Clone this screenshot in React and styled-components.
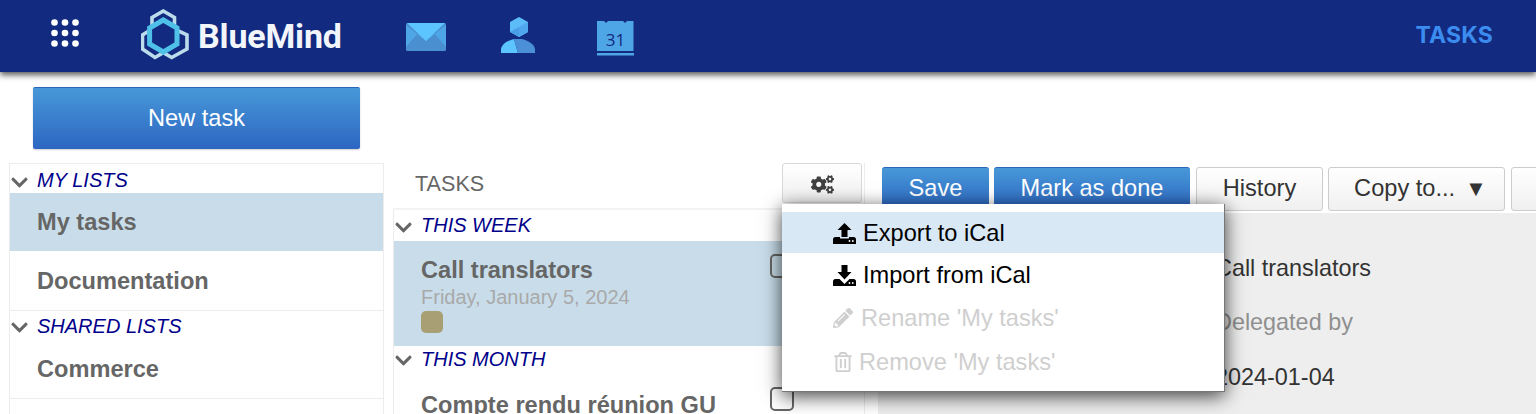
import React from "react";
import styled, { createGlobalStyle } from "styled-components";
import { FaCogs, FaPencilAlt, FaRegTrashAlt, FaChevronDown } from "react-icons/fa";

const Global = createGlobalStyle`
  html, body { margin: 0; padding: 0; height: 414px; overflow: hidden; background: #fff; }
  body { font-family: "Liberation Sans", Arial, sans-serif; }
  * { box-sizing: border-box; }
`;

const Page = styled.div`
  width: 1536px;
  height: 414px;
  overflow: hidden;
  display: flex;
  flex-direction: column;
`;

const TopBar = styled.header`
  position: relative;
  z-index: 2;
  flex: 0 0 72px;
  display: flex;
  align-items: center;
  background: #122a80;
  box-shadow: 0 3px 6px rgba(0, 0, 0, 0.65);
`;

const AppGrid = styled.svg`
  width: 30px;
  height: 30px;
  margin-left: 50px;
  margin-top: -6px;
`;

const Logo = styled.div`
  display: flex;
  align-items: center;
  margin-left: 61px;
  margin-top: -3px;
  width: 265px;
`;

const LogoName = styled.span`
  font-family: "Roboto", sans-serif;
  font-size: 34px;
  font-weight: 700;
  letter-spacing: -0.15px;
  color: #f2f6fb;
  margin-left: 9px;
  margin-top: 3px;
`;

const AppIcon = styled.svg`
  display: block;
  flex: none;
  margin-left: ${(p) => p.$ml || 0}px;
  margin-top: ${(p) => p.$mt || 0}px;
`;

const AppName = styled.div`
  margin-left: auto;
  margin-right: 43px;
  margin-top: -3px;
  font-family: "Inter", sans-serif;
  font-size: 23px;
  font-weight: 700;
  letter-spacing: 0.2px;
  color: #3c8cf0;
`;

const ActionRow = styled.div`
  flex: 0 0 91px;
  padding: 15px 0 0 33px;
`;

const PrimaryBig = styled.button`
  display: block;
  width: 327px;
  height: 62px;
  padding: 0;
  border: 0;
  border-top: 1px solid #2a66b8;
  border-radius: 2px;
  background: linear-gradient(#4898d8, #2c66c2);
  color: #fff;
  font: 23.6px "Liberation Sans", Arial, sans-serif;
  box-shadow: 0 1px 2px rgba(0, 0, 0, 0.2);
`;

const Columns = styled.div`
  flex: 1;
  display: flex;
  padding-left: 9px;
  min-height: 0;
`;

const Sidebar = styled.aside`
  flex: 0 0 375px;
  height: 290px;
  border: 1px solid #ececec;
  border-bottom: 0;
`;

const SectionHead = styled.div`
  display: flex;
  align-items: center;
  height: ${(p) => p.$h}px;
  padding-top: ${(p) => p.$pt || 0}px;
  padding-bottom: ${(p) => p.$pb || 0}px;
  color: #00008b;
  font-size: 20px;
  font-style: italic;
`;

const Chevron = styled(FaChevronDown)`
  flex: none;
  width: 19px;
  height: 19px;
  margin: 3px 8px 0 0;
  color: #666;
`;

const ListRow = styled.div`
  height: ${(p) => p.$h}px;
  display: flex;
  align-items: center;
  padding-left: 27px;
  padding-bottom: ${(p) => p.$pb || 0}px;
  padding-top: ${(p) => p.$pt || 0}px;
  font-size: 23.6px;
  font-weight: 700;
  color: #666;
  background: ${(p) => (p.$active ? "#c8dde9" : "transparent")};
  border-bottom: ${(p) => (p.$line ? "1px solid #ececec" : "0")};
`;

const Middle = styled.section`
  flex: 0 0 472px;
  margin-left: 9px;
  border-right: 1px solid #ececec;
`;

const MiddleHead = styled.div`
  display: flex;
  align-items: flex-start;
  height: 47px;
  border-bottom: 2px solid #f3f3f3;
  padding-left: 22px;
  padding-right: 2px;
`;

const MiddleTitle = styled.div`
  margin-top: 8px;
  font-size: 21.6px;
  color: #666;
`;

const MenuAnchor = styled.div`
  position: relative;
  margin-left: auto;
`;

const GearButton = styled.button`
  display: flex;
  justify-content: center;
  width: 80px;
  height: 40px;
  padding: 9px 0 0;
  border: 1px solid #d8d8d8;
  border-radius: 3px;
  background: linear-gradient(#fff, #f0f0f0);
  color: #404040;
  font-size: 23px;
`;

const Menu = styled.div`
  position: absolute;
  z-index: 5;
  left: 0;
  top: 41px;
  width: 443px;
  height: 188px;
  padding-top: 8px;
  background: #fff;
  border: 1px solid #777;
  border-width: 0 1px 1px 0;
  box-shadow: 0 4px 18px rgba(0, 0, 0, 0.75);
`;

const MenuItem = styled.div`
  display: flex;
  align-items: center;
  height: ${(p) => p.$h}px;
  padding: 2px 0 0 51px;
  font-size: 23.6px;
  color: ${(p) => (p.$disabled ? "#cfcfcf" : "#000")};
  background: ${(p) => (p.$hot ? "#d9e8f5" : "transparent")};
  white-space: nowrap;
  svg {
    flex: none;
    margin-right: ${(p) => p.$gap}px;
  }
`;

const TaskList = styled.div`
  border-left: 1px solid #ececec;
`;

const TaskRow = styled.div`
  position: relative;
  padding: ${(p) => p.$pt}px 0 0 27px;
  height: ${(p) => p.$h}px;
  background: ${(p) => (p.$active ? "#c8dde9" : "transparent")};
`;

const TaskTitle = styled.div`
  font-size: 23.6px;
  line-height: 29px;
  font-weight: 700;
  color: #666;
  white-space: nowrap;
`;

const TaskDate = styled.div`
  font-size: 20px;
  line-height: 25px;
  color: #a9a9a9;
`;

const TaskTag = styled.div`
  width: 22px;
  height: 22px;
  margin-top: 1px;
  border-radius: 5px;
  background: #a8a074;
`;

const TaskCheck = styled.div`
  position: absolute;
  left: 376px;
  top: ${(p) => p.$top}px;
  width: 24px;
  height: 24px;
  border: 2px solid #666;
  border-radius: 5px;
`;

const Detail = styled.section`
  flex: 1;
  margin-left: 13px;
  min-width: 0;
`;

const DetailBar = styled.div`
  display: flex;
  gap: 5px;
  height: 50px;
  padding: 4px 0 0 4px;
  background: #fff;
`;

const BlueButton = styled.button`
  flex: none;
  width: ${(p) => p.$w}px;
  height: 44px;
  padding: 0 0 2px;
  border: 0;
  border-top: 1px solid #2a66b8;
  border-radius: 3px;
  background: linear-gradient(#4898d8, #2c66c2);
  color: #fff;
  font: 23.6px "Liberation Sans", Arial, sans-serif;
`;

const PlainButton = styled.button`
  flex: none;
  width: ${(p) => p.$w}px;
  height: 44px;
  margin-left: ${(p) => p.$ml || 0}px;
  padding: 0 0 2px ${(p) => p.$pl || 0}px;
  border: 1px solid #ccc;
  border-radius: 3px;
  background: linear-gradient(#fff, #f0f0f0);
  color: #333;
  font: 23.6px "Liberation Sans", Arial, sans-serif;
`;

const Caret = styled.span`
  margin-left: 10px;
  font-size: 22px;
  line-height: 20px;
`;

const DetailBody = styled.div`
  height: 240px;
  background: #eee;
  padding: 42px 0 0 337px;
`;

const Field = styled.div`
  font-size: 23.4px;
  line-height: 27px;
  height: ${(p) => p.$h}px;
  color: ${(p) => (p.$muted ? "#909090" : "#333")};
  white-space: nowrap;
`;

const dots = [];
for (let y = 0; y < 3; y++) for (let x = 0; x < 3; x++) dots.push([x, y]);

const Tray = ({ notch }) => (
  <>
    <path d={notch} fill="currentColor" />
    <circle cx="16.5" cy="18" r="0.9" fill="#fff" />
    <circle cx="19.8" cy="18" r="0.9" fill="#fff" />
  </>
);

const UploadIcon = () => (
  <svg width="23" height="21" viewBox="0 0 23 21">
    <path d="M11.500 0 L18.500 7 H14.500 V14 H8.500 V7 H4.500 Z" fill="currentColor" />
    <Tray notch="M0 21 V16.500 Q0 14 2.500 14 H7 V15.500 H16 V14 H20.500 Q23 14 23 16.500 V21 Z" />
  </svg>
);

const DownloadIcon = () => (
  <svg width="23" height="21" viewBox="0 0 23 21">
    <path d="M8.500 0 H14.500 V7 H18.500 L11.500 14.500 L4.500 7 H8.500 Z" fill="currentColor" />
    <Tray notch="M0 21 V16.500 Q0 14 2.500 14 H6.500 L11.500 19 L16.500 14 H20.500 Q23 14 23 16.500 V21 Z" />
  </svg>
);

export default function App() {
  return (
    <Page>
      <Global />
      <TopBar>
        <AppGrid viewBox="0 0 30 30">
          {dots.map(([x, y]) => (
            <circle key={`${x}${y}`} cx={4.5 + x * 10.5} cy={4.5 + y * 10.5} r="3.3" fill="#fff" />
          ))}
        </AppGrid>
        <Logo>
          <AppIcon width="48" height="51" viewBox="0 0 48 51">
            <path
              d="M22.300 2 L33.500 8.500 V20 L46 26 V40 L30.700 48.500 L22.300 43.700 L14 48.500 L1.500 40 V26 L11 20 V8.500 Z"
              fill="none"
              stroke="#bcdcec"
              strokeWidth="3.6"
            />
            <path
              d="M22.300 11 L36 19 V35 L22.300 43 L8.600 35 V19 Z"
              fill="#122a80"
              stroke="#4fc0e8"
              strokeWidth="5"
            />
          </AppIcon>
          <LogoName>BlueMind</LogoName>
        </Logo>
        <AppIcon width="40" height="29" viewBox="0 0 40 29" $mt={2}>
          <rect width="40" height="28" rx="1.5" fill="#4a8fd0" />
          <path d="M0 2 L20 18 L40 2 V24 L28 10 L20 17 L12 10 L0 24 Z" fill="#4fa6e6" />
          <path d="M1 0 H39 L20 18 Z" fill="#5cc4ff" />
        </AppIcon>
        <AppIcon width="36" height="38" viewBox="0 0 36 38" $ml={55}>
          <path d="M18 0 L27 5 V15 L18 20 L9 15 V5 Z" fill="#5cbcf8" />
          <path d="M18 10 L27 5 V15 L18 20 Z" fill="#4fa8ee" />
          <path d="M9 15 L18 10 V20 Z" fill="#4a9ee6" />
          <path d="M0 36 V32 C1 27 6 24 13 22 L17 36 Z" fill="#5cc4ff" />
          <path d="M34 36 V32 C33 27 28 24 21 22 H13 L17 36 Z" fill="#4a8fd8" />
        </AppIcon>
        <AppIcon width="37" height="36" viewBox="0 0 37 36" $ml={60} $mt={5}>
          <path d="M0 0 H7 L9 2 L11 0 H26 L28 2 L30 0 H36.500 V30 H0 Z" fill="#4fa6e6" />
          <rect y="32" width="37" height="2.500" fill="#4fa6e6" />
          <text x="18.500" y="25" textAnchor="middle" fontFamily="Open Sans" fontSize="17" fill="#122a80">31</text>
        </AppIcon>
        <AppName>TASKS</AppName>
      </TopBar>
      <ActionRow>
        <PrimaryBig>New task</PrimaryBig>
      </ActionRow>
      <Columns>
        <Sidebar>
          <SectionHead $h={29} $pt={4}><Chevron />MY LISTS</SectionHead>
          <ListRow $active $h={58}>My tasks</ListRow>
          <ListRow $line $h={60} $pt={2}>Documentation</ListRow>
          <SectionHead $h={29} $pt={1}><Chevron />SHARED LISTS</SectionHead>
          <ListRow $line $h={59}>Commerce</ListRow>
        </Sidebar>
        <Middle>
          <MiddleHead>
            <MiddleTitle>TASKS</MiddleTitle>
            <MenuAnchor>
              <GearButton><FaCogs /></GearButton>
              <Menu>
                <MenuItem $hot $h={41} $gap={7}><UploadIcon />Export to iCal</MenuItem>
                <MenuItem $h={42} $gap={7}><DownloadIcon />Import from iCal</MenuItem>
                <MenuItem $h={44} $gap={8} $disabled><FaPencilAlt size={20} />Rename 'My tasks'</MenuItem>
                <MenuItem $h={44} $gap={6} $disabled><FaRegTrashAlt size={20} />Remove 'My tasks'</MenuItem>
              </Menu>
            </MenuAnchor>
          </MiddleHead>
          <TaskList>
            <SectionHead $h={31}><Chevron />THIS WEEK</SectionHead>
            <TaskRow $active $h={105} $pt={15}>
              <TaskTitle>Call translators</TaskTitle>
              <TaskDate>Friday, January 5, 2024</TaskDate>
              <TaskTag />
              <TaskCheck $top={13} />
            </TaskRow>
            <SectionHead $h={26}><Chevron />THIS MONTH</SectionHead>
            <TaskRow $h={60} $pt={19}>
              <TaskTitle>Compte rendu réunion GU</TaskTitle>
              <TaskCheck $top={15} />
            </TaskRow>
          </TaskList>
        </Middle>
        <Detail>
          <DetailBar>
            <BlueButton $w={107}>Save</BlueButton>
            <BlueButton $w={196}>Mark as done</BlueButton>
            <PlainButton $w={127} $ml={1}>History</PlainButton>
            <PlainButton $w={177} $pl={8}>Copy to...<Caret>▼</Caret></PlainButton>
            <PlainButton $w={60} $ml={1} />
          </DetailBar>
          <DetailBody>
            <Field $h={54}>Call translators</Field>
            <Field $h={55} $muted>Delegated by</Field>
            <Field $h={30}>2024-01-04</Field>
          </DetailBody>
        </Detail>
      </Columns>
    </Page>
  );
}
